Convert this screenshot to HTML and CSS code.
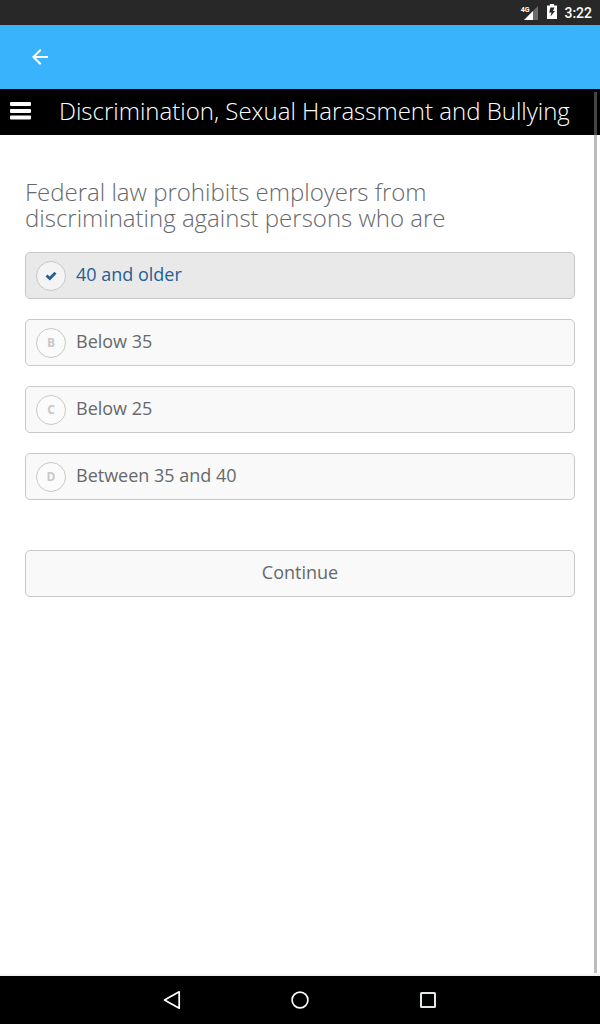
FILE: index.html
```html
<!DOCTYPE html>
<html lang="en">
<head>
<meta charset="utf-8">
<meta name="viewport" content="width=device-width, initial-scale=1">
<title>Discrimination, Sexual Harassment and Bullying</title>
<link rel="stylesheet" href="styles.css">
</head>
<body>
<div class="status-bar">
  <div class="signal">
    <svg width="14" height="14" viewBox="0 0 14 14" aria-hidden="true">
      <path d="M14 0V14H0z" fill="#6b6b6b"/>
      <path d="M9 5V14H0z" fill="#fff"/>
    </svg>
    <span class="network">4G</span>
  </div>
  <svg class="battery" width="10" height="16" viewBox="0 0 10 16" aria-hidden="true">
    <path d="M3 0H7V1.500H10V15H0V1.500H3z" fill="#fff"/>
    <path d="M3.500 3.500H7.500L6 7H8L3.500 12.500L4.500 8.500H2.200z" fill="#282828"/>
  </svg>
  <time class="clock">3:22</time>
</div>
<header class="app-bar">
  <button class="icon-button" type="button" aria-label="Back">
    <svg width="24" height="24" viewBox="0 0 24 24" aria-hidden="true"><path d="M20 11H7.830l5.590-5.590L12 4l-8 8 8 8 1.410-1.410L7.830 13H20v-2z" fill="#fff"/></svg>
  </button>
</header>
<div class="web-view">
  <div class="course-bar">
    <button class="icon-button" type="button" aria-label="Menu">
      <svg width="21" height="20" viewBox="0 0 21 20" aria-hidden="true"><path d="M1 1H20Q21 1 21 2V4Q21 5 20 5H1Q0 5 0 4V2Q0 1 1 1zM1 8H20Q21 8 21 9V11Q21 12 20 12H1Q0 12 0 11V9Q0 8 1 8zM1 14.500H20Q21 14.500 21 15.500V17.500Q21 18.500 20 18.500H1Q0 18.500 0 17.500V15.500Q0 14.500 1 14.500z" fill="#fff"/></svg>
    </button>
    <h1 class="course-title">Discrimination, Sexual Harassment and Bullying</h1>
  </div>
  <form class="quiz">
    <h2 class="question" id="question">Federal law prohibits employers from discriminating against persons who are</h2>
    <div class="answers" role="radiogroup" aria-labelledby="question">
      <label class="answer">
        <input class="radio" type="radio" name="answer" checked>
        <span class="mark"><svg width="12" height="10" viewBox="0 0 12 10" aria-hidden="true"><path d="M1.500 4.500L4.800 7.500L10.500 1.800" fill="none" stroke="#235f92" stroke-width="2.800"/></svg></span>
        <span class="answer-text">40 and older</span>
      </label>
      <label class="answer">
        <input class="radio" type="radio" name="answer">
        <span class="mark">B</span>
        <span class="answer-text">Below 35</span>
      </label>
      <label class="answer">
        <input class="radio" type="radio" name="answer">
        <span class="mark">C</span>
        <span class="answer-text">Below 25</span>
      </label>
      <label class="answer">
        <input class="radio" type="radio" name="answer">
        <span class="mark">D</span>
        <span class="answer-text">Between 35 and 40</span>
      </label>
    </div>
    <button class="continue" type="button">Continue</button>
  </form>
  <div class="scroll-thumb"></div>
</div>
<nav class="nav-bar">
  <button class="icon-button" type="button" aria-label="Back">
    <svg width="20" height="20" viewBox="0 0 20 20" aria-hidden="true"><path d="M17.200 1.800V18.200L2.500 10z" fill="none" stroke="#fff" stroke-width="1.700" stroke-linejoin="round"/></svg>
  </button>
  <button class="icon-button" type="button" aria-label="Home">
    <svg width="20" height="20" viewBox="0 0 20 20" aria-hidden="true"><circle cx="10" cy="10" r="7.900" fill="none" stroke="#fff" stroke-width="1.700"/></svg>
  </button>
  <button class="icon-button" type="button" aria-label="Recent apps">
    <svg width="20" height="20" viewBox="0 0 20 20" aria-hidden="true"><rect x="3" y="3" width="14" height="14" rx=".5" fill="none" stroke="#e4e8e4" stroke-width="2"/></svg>
  </button>
</nav>
</body>
</html>
```

FILE: styles.css
```css
* {
  box-sizing: border-box;
}

body {
  margin: 0;
  min-height: 100vh;
  display: flex;
  flex-direction: column;
  background: #fff;
  color: #66696b;
  font-family: "Open Sans", "Noto Sans", sans-serif;
}

svg {
  display: block;
}

.icon-button {
  display: block;
  flex: none;
  padding: 0;
  border: 0;
  background: none;
}

.status-bar {
  display: flex;
  justify-content: flex-end;
  align-items: center;
  height: 25px;
  padding-right: 8px;
  background: #282828;
}

.signal {
  position: relative;
  margin-right: 9px;
}

.network {
  position: absolute;
  top: 0;
  right: 9px;
  color: #fff;
  font: 700 7px/8px Roboto, sans-serif;
}

.battery {
  margin-right: 7px;
  margin-bottom: 2px;
}

.clock {
  color: #fff;
  font: 500 14px/26px Roboto, sans-serif;
}

.app-bar {
  display: flex;
  align-items: center;
  height: 64px;
  padding: 0 28px;
  background: #39b3fc;
}

.web-view {
  position: relative;
  flex: 1;
  background: linear-gradient(to top, #eee, #fff 3px);
}

.course-bar {
  display: flex;
  align-items: center;
  gap: 28px;
  min-height: 46px;
  padding: 0 10px 2px;
  background: #000;
}

.course-title {
  margin: 0;
  color: #fff;
  font-size: 24px;
  font-weight: 300;
  line-height: 44px;
}

.quiz {
  padding: 44px 25px;
}

.question {
  margin: 0 0 21px;
  font-size: 24px;
  font-weight: 300;
  line-height: 26px;
}

.answers {
  display: grid;
  gap: 20px;
}

.answer,
.continue {
  border: 1px solid #c8c8c8;
  border-radius: 5px;
  background: #f9f9f9;
  font-size: 18px;
  line-height: 24px;
}

.answer {
  display: grid;
  grid-template-columns: 30px 1fr;
  column-gap: 10px;
  align-items: center;
  min-height: 47px;
  padding: 8px 10px 7px;
}

.answer:has(:checked) {
  background: #e9e9e9;
  color: #235f92;
}

.radio {
  appearance: none;
  grid-area: 1 / 1;
  width: 30px;
  height: 30px;
  margin: 0;
  border: 1px solid #c8c8c8;
  border-radius: 50%;
  background: #fbfbfb;
}

.radio:checked {
  background: #f4f4f4;
}

.mark {
  grid-area: 1 / 1;
  z-index: 1;
  justify-self: center;
  color: #c8c8c8;
  font-size: 12px;
  font-weight: 700;
  line-height: 30px;
}

.answer-text {
  padding-bottom: 4px;
}

.continue {
  display: block;
  width: 100%;
  min-height: 47px;
  margin-top: 50px;
  padding: 9px 20px 12px;
  color: inherit;
  font-family: inherit;
}

.scroll-thumb {
  position: absolute;
  top: 3px;
  right: 3px;
  bottom: 3px;
  width: 3px;
  background: rgba(128, 128, 128, 0.53);
}

.nav-bar {
  display: flex;
  justify-content: center;
  align-items: center;
  gap: 108px;
  height: 48px;
  background: #000;
}
```
